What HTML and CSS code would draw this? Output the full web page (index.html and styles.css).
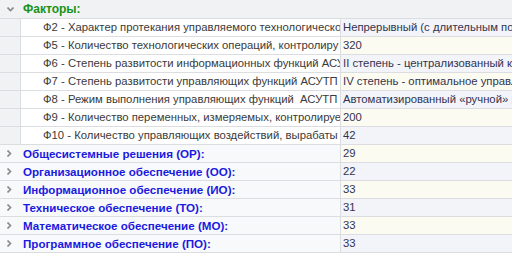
FILE: index.html
```html
<!DOCTYPE html>
<html lang="ru">
<head>
<meta charset="utf-8">
<link rel="stylesheet" href="styles.css">
</head>
<body>
<div class="tree">
  <div class="row header">
    <span class="toggle"><svg width="7" height="5" viewBox="0 0 7 5"><path d="M0.5 0.5 L3.5 3.5 L6.5 0.5" fill="none" stroke="#8a8a8a" stroke-width="1.6"/></svg></span>
    <span class="cat">Факторы:</span>
  </div>
  <div class="row child"><div class="indent"></div><div class="name">Ф2 - Характер протекания управляемого технологическо</div><div class="val v-b">Непрерывный (с длительным под</div></div>
  <div class="row child"><div class="indent"></div><div class="name">Ф5 - Количество технологических операций, контролиру</div><div class="val v-c">320</div></div>
  <div class="row child"><div class="indent"></div><div class="name">Ф6 - Степень развитости информационных функций АСУТ</div><div class="val v-b">II степень - централизованный ко</div></div>
  <div class="row child"><div class="indent"></div><div class="name">Ф7 - Степень развитости управляющих функций АСУТП</div><div class="val v-c">IV степень - оптимальное управле</div></div>
  <div class="row child"><div class="indent"></div><div class="name">Ф8 - Режим выполнения управляющих функций&nbsp; АСУТП</div><div class="val v-b">Автоматизированный «ручной» р</div></div>
  <div class="row child"><div class="indent"></div><div class="name">Ф9 - Количество переменных, измеряемых, контролируем</div><div class="val v-c">200</div></div>
  <div class="row child"><div class="indent"></div><div class="name">Ф10 - Количество управляющих воздействий, вырабаты</div><div class="val v-b">42</div></div>
  <div class="row group"><div class="gname"><span class="toggle r"><svg width="5" height="7" viewBox="0 0 5 7"><path d="M0.5 0.5 L3.5 3.5 L0.5 6.5" fill="none" stroke="#8a8a8a" stroke-width="1.6"/></svg></span><span class="gtext">Общесистемные решения (ОР):</span></div><div class="val v-c">29</div></div>
  <div class="row group"><div class="gname"><span class="toggle r"><svg width="5" height="7" viewBox="0 0 5 7"><path d="M0.5 0.5 L3.5 3.5 L0.5 6.5" fill="none" stroke="#8a8a8a" stroke-width="1.6"/></svg></span><span class="gtext">Организационное обеспечение (ОО):</span></div><div class="val v-b">22</div></div>
  <div class="row group"><div class="gname"><span class="toggle r"><svg width="5" height="7" viewBox="0 0 5 7"><path d="M0.5 0.5 L3.5 3.5 L0.5 6.5" fill="none" stroke="#8a8a8a" stroke-width="1.6"/></svg></span><span class="gtext">Информационное обеспечение (ИО):</span></div><div class="val v-c">33</div></div>
  <div class="row group"><div class="gname"><span class="toggle r"><svg width="5" height="7" viewBox="0 0 5 7"><path d="M0.5 0.5 L3.5 3.5 L0.5 6.5" fill="none" stroke="#8a8a8a" stroke-width="1.6"/></svg></span><span class="gtext">Техническое обеспечение (ТО):</span></div><div class="val v-b">31</div></div>
  <div class="row group"><div class="gname"><span class="toggle r"><svg width="5" height="7" viewBox="0 0 5 7"><path d="M0.5 0.5 L3.5 3.5 L0.5 6.5" fill="none" stroke="#8a8a8a" stroke-width="1.6"/></svg></span><span class="gtext">Математическое обеспечение (МО):</span></div><div class="val v-c">33</div></div>
  <div class="row group"><div class="gname"><span class="toggle r"><svg width="5" height="7" viewBox="0 0 5 7"><path d="M0.5 0.5 L3.5 3.5 L0.5 6.5" fill="none" stroke="#8a8a8a" stroke-width="1.6"/></svg></span><span class="gtext">Программное обеспечение (ПО):</span></div><div class="val v-b">33</div></div>
</div>
</body>
</html>
```
FILE: styles.css
```css
html, body {
  margin: 0;
  padding: 0;
  background: #ffffff;
  overflow: hidden;
}
.tree {
  width: 512px;
  font-family: "Liberation Sans", Arial, sans-serif;
  font-size: 11.3px;
}
.row {
  display: flex;
  height: 17px;
  line-height: 17px;
  border-bottom: 1px solid #dcdde0;
  white-space: nowrap;
  overflow: hidden;
}
.row.header {
  height: 18px;
  line-height: 18px;
  background: #f1f2f4;
  align-items: center;
}
.toggle {
  display: flex;
  align-items: center;
  justify-content: center;
  width: 22px;
  flex: none;
  height: 100%;
}
.header .toggle {
  width: 21px;
  padding-top: 1px;
}
.cat {
  color: #179217;
  font-weight: bold;
  font-size: 12px;
  padding-left: 2px;
}
.indent {
  width: 20px;
  flex: none;
  background: #f1f2f4;
  border-right: 1px solid #dcdde0;
}
.name {
  width: 297px;
  flex: none;
  padding-left: 22px;
  background: #ffffff;
  border-right: 1px solid #dcdde0;
  color: #3a3a3a;
  overflow: hidden;
  text-overflow: clip;
}
.group {
  background: #f8f9fa;
}
.gname {
  display: flex;
  width: 340px;
  flex: none;
  border-right: 1px solid #dcdde0;
  overflow: hidden;
}
.gname .toggle {
  justify-content: flex-start;
  padding-left: 7px;
  box-sizing: border-box;
  width: 23px;
}
.gtext {
  color: #1a1ae0;
  font-weight: bold;
  font-size: 11.6px;
}
.val {
  flex: 1;
  padding-left: 2px;
  color: #333350;
  overflow: hidden;
}
.v-b { background: #f2f4f9; }
.v-c { background: #fcfbf2; }
```
